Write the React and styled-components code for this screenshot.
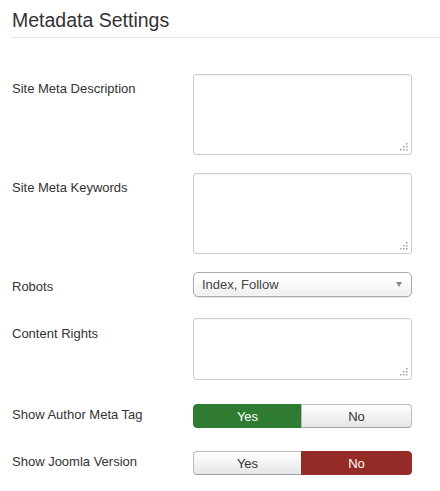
import React from "react";
import styled, { createGlobalStyle } from "styled-components";

const GlobalStyle = createGlobalStyle`
  body {
    margin: 0;
    background: #fff;
    font-family: "Liberation Sans", Arial, sans-serif;
    color: #333;
  }
`;

const Page = styled.div`
  width: 440px;
  padding-left: 12px;
  box-sizing: border-box;
`;

const Heading = styled.h2`
  margin: 0;
  padding: 8px 0 5px;
  font-size: 19.5px;
  line-height: 24px;
  font-weight: normal;
  color: #333;
  border-bottom: 1px solid #e5e5e5;
`;

const Form = styled.div`
  margin-top: 36px;
`;

const Row = styled.div`
  display: grid;
  grid-template-columns: 181px 219px;
  align-items: start;
  margin-bottom: ${(p) => p.$gap || 0}px;
`;

const Label = styled.label`
  display: block;
  font-size: 13px;
  line-height: 18px;
  padding-top: ${(p) => p.$pad || 0}px;
  color: #333;
`;

const TextBox = styled.div`
  position: relative;
  height: ${(p) => p.$h}px;
  box-sizing: border-box;
  border: 1px solid #ccc;
  border-radius: 3px;
  background: #fff;
  box-shadow: inset 0 1px 1px rgba(0, 0, 0, 0.04);
`;

const Grip = styled.svg`
  position: absolute;
  right: 3px;
  bottom: 3px;
`;

const Select = styled.div`
  display: flex;
  align-items: center;
  justify-content: space-between;
  height: 25px;
  box-sizing: border-box;
  padding: 0 9px 0 8px;
  border: 1px solid #aaa;
  border-radius: 5px;
  background: linear-gradient(#ffffff 20%, #eeeeee 100%);
  box-shadow: 0 0 3px #fff inset, 0 1px 1px rgba(0, 0, 0, 0.1);
  font-size: 13px;
  color: #444;
`;

const Arrow = styled.span`
  width: 0;
  height: 0;
  border-left: 3.5px solid transparent;
  border-right: 3.5px solid transparent;
  border-top: 5px solid #888;
`;

const Toggle = styled.div`
  display: grid;
  grid-template-columns: 109px 110px;
  height: 24px;
`;

const Choice = styled.div`
  display: flex;
  align-items: center;
  justify-content: center;
  box-sizing: border-box;
  font-size: 13px;
  border: 1px solid ${(p) => (p.$on ? p.$color : "#bbb")};
  border-bottom-color: ${(p) => (p.$on ? p.$color : "#a2a2a2")};
  background: ${(p) =>
    p.$on ? p.$color : "linear-gradient(#ffffff, #e6e6e6)"};
  color: ${(p) => (p.$on ? "#fff" : "#333")};
  border-radius: ${(p) => (p.$first ? "4px 0 0 4px" : "0 4px 4px 0")};
  ${(p) => (p.$first ? "" : "margin-left: -1px;")}
`;

const ResizeGrip = () => (
  <Grip width="8" height="8" viewBox="0 0 8 8">
    {[
      [6, 0],
      [3, 3],
      [6, 3],
      [0, 6],
      [3, 6],
      [6, 6],
    ].map(([x, y]) => (
      <rect key={`${x}-${y}`} x={x} y={y} width="1.5" height="1.5" fill="#a0a0a0" />
    ))}
  </Grip>
);

const YesNo = ({ value }) => (
  <Toggle>
    <Choice $first $on={value} $color="#2f7b32">
      Yes
    </Choice>
    <Choice $on={!value} $color="#952b26">
      No
    </Choice>
  </Toggle>
);

const App = () => (
  <Page>
    <GlobalStyle />
    <Heading>Metadata Settings</Heading>
    <Form>
      <Row $gap={18}>
        <Label $pad={6}>Site Meta Description</Label>
        <TextBox $h={81}>
          <ResizeGrip />
        </TextBox>
      </Row>
      <Row $gap={18}>
        <Label $pad={6}>Site Meta Keywords</Label>
        <TextBox $h={81}>
          <ResizeGrip />
        </TextBox>
      </Row>
      <Row $gap={21}>
        <Label $pad={6}>Robots</Label>
        <Select>
          <span>Index, Follow</span>
          <Arrow />
        </Select>
      </Row>
      <Row $gap={24}>
        <Label $pad={7}>Content Rights</Label>
        <TextBox $h={62}>
          <ResizeGrip />
        </TextBox>
      </Row>
      <Row $gap={23}>
        <Label $pad={2}>Show Author Meta Tag</Label>
        <YesNo value={true} />
      </Row>
      <Row>
        <Label $pad={2}>Show Joomla Version</Label>
        <YesNo value={false} />
      </Row>
    </Form>
  </Page>
);

export default App;
